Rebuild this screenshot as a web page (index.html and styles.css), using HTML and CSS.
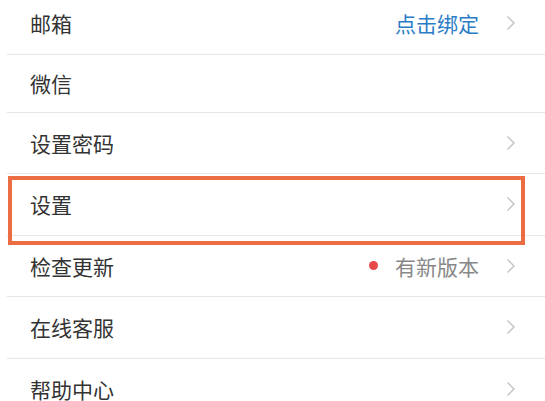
FILE: index.html
```html
<!DOCTYPE html>
<html lang="zh-CN">
<head>
    <meta charset="UTF-8">
    <meta name="viewport" content="width=device-width, initial-scale=1.0">
    <title>账号设置</title>
    <link rel="stylesheet" href="styles.css">
</head>
<body>

<div class="list">
    <div class="row">
        <span class="label">邮箱</span>
        <span class="value link">点击绑定</span>
        <svg class="arrow" viewBox="0 0 10 16"><path d="M1.5 1.5 L8 8 L1.5 14.5"/></svg>
    </div>
    <div class="row row-short">
        <span class="label">微信</span>
    </div>
    <div class="row">
        <span class="label">设置密码</span>
        <svg class="arrow" viewBox="0 0 10 16"><path d="M1.5 1.5 L8 8 L1.5 14.5"/></svg>
    </div>
    <div class="row highlighted">
        <span class="label">设置</span>
        <svg class="arrow" viewBox="0 0 10 16"><path d="M1.5 1.5 L8 8 L1.5 14.5"/></svg>
    </div>
    <div class="row">
        <span class="label">检查更新</span>
        <span class="dot"></span>
        <span class="value">有新版本</span>
        <svg class="arrow" viewBox="0 0 10 16"><path d="M1.5 1.5 L8 8 L1.5 14.5"/></svg>
    </div>
    <div class="row">
        <span class="label">在线客服</span>
        <svg class="arrow" viewBox="0 0 10 16"><path d="M1.5 1.5 L8 8 L1.5 14.5"/></svg>
    </div>
    <div class="row">
        <span class="label">帮助中心</span>
        <svg class="arrow" viewBox="0 0 10 16"><path d="M1.5 1.5 L8 8 L1.5 14.5"/></svg>
    </div>
</div>

</body>
</html>
```

FILE: styles.css
```css
body {
    margin: 0;
    background-color: #ffffff;
    font-family: "Noto Sans CJK SC", "Noto Sans", sans-serif;
    overflow: hidden;
}
.list {
    margin: -7px 0 0 7px;
}
.row {
    position: relative;
    box-sizing: border-box;
    height: 61.5px;
    display: flex;
    align-items: center;
    padding: 0 29px 0 23px;
    border-bottom: 1px solid #e6e6e6;
}
.row-short {
    height: 58px;
}
.label {
    flex: 1;
    font-size: 21px;
    color: #333333;
}
.value {
    font-size: 21px;
    color: #888888;
    margin-right: 27px;
}
.value.link {
    color: #2b7cc6;
}
.dot {
    width: 9px;
    height: 9px;
    border-radius: 50%;
    background-color: #e84a4c;
    margin-right: 17px;
}
.arrow {
    width: 10px;
    height: 16px;
    fill: none;
    stroke: #c4c4c4;
    stroke-width: 1.4;
}
.highlighted::after {
    content: "";
    position: absolute;
    left: 1px;
    top: 2px;
    width: 517px;
    height: 69px;
    box-sizing: border-box;
    border: 4px solid #ec6d43;
}
```
